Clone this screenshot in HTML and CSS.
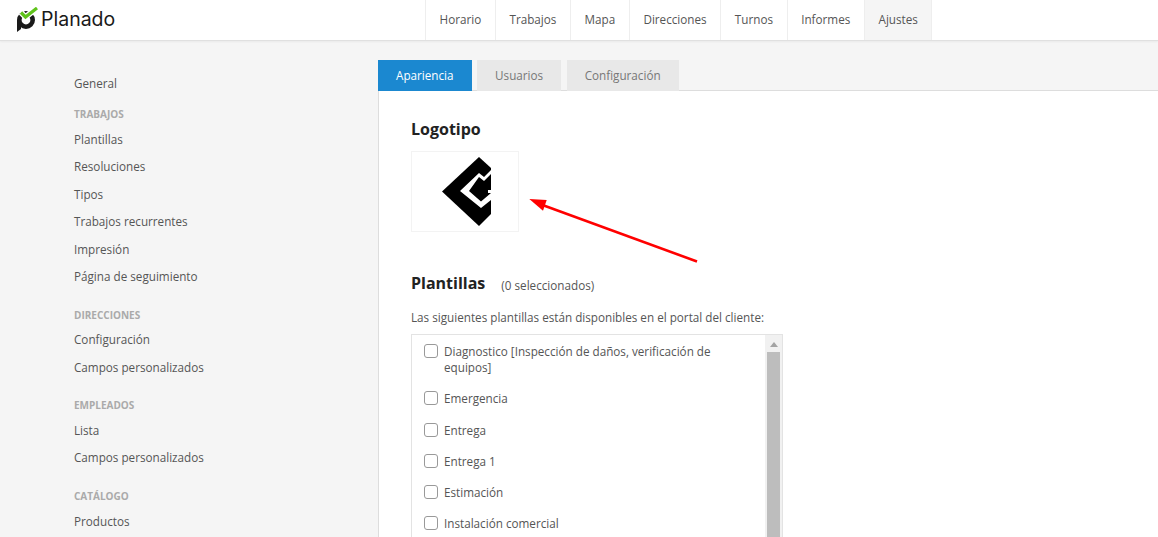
FILE: index.html
```html
<!DOCTYPE HTML>
<html>
<head>
    <meta charset="utf-8" />
    <title>Planado</title>
    <link rel="stylesheet" href="styles.css">
</head>
<body>

<header class="topbar">
    <a class="brand" href="#">
        <svg class="brand-icon" width="24" height="27" viewBox="16 7 24 27">
            <circle cx="26" cy="20" r="6.7" fill="none" stroke="#1a1a1a" stroke-width="4.6"/>
            <path d="M17 20h4v9l-4 3z" fill="#1a1a1a"/>
            <path d="M21 12.5l4.5 4.5L37 8" fill="none" stroke="#fff" stroke-width="6"/>
            <path d="M21 12.5l4.5 4.5L37 8" fill="none" stroke="#5fc31b" stroke-width="3.2"/>
        </svg>
        <span class="brand-name">Planado</span>
    </a>
    <nav class="topnav">
        <a href="#">Horario</a>
        <a href="#">Trabajos</a>
        <a href="#">Mapa</a>
        <a href="#">Direcciones</a>
        <a href="#">Turnos</a>
        <a href="#">Informes</a>
        <a href="#" class="active">Ajustes</a>
    </nav>
</header>

<div class="layout">
    <aside class="sidebar">
        <a href="#">General</a>
        <h4>Trabajos</h4>
        <a href="#">Plantillas</a>
        <a href="#">Resoluciones</a>
        <a href="#">Tipos</a>
        <a href="#">Trabajos recurrentes</a>
        <a href="#">Impresión</a>
        <a href="#">Página de seguimiento</a>
        <h4>Direcciones</h4>
        <a href="#">Configuración</a>
        <a href="#">Campos personalizados</a>
        <h4>Empleados</h4>
        <a href="#">Lista</a>
        <a href="#">Campos personalizados</a>
        <h4>Catálogo</h4>
        <a href="#">Productos</a>
    </aside>

    <main class="content">
        <div class="tabs">
            <a href="#" class="active">Apariencia</a>
            <a href="#">Usuarios</a>
            <a href="#">Configuración</a>
        </div>
        <div class="panel">
            <h2>Logotipo</h2>
            <div class="logo-box">
                <svg width="51" height="72" viewBox="441 155 51 72">
                    <path fill="#000" d="M442 191.5 479 157 491 168V214L479 226z"/>
                    <path fill="#fff" d="M460 191 479 173 484 177 491 170V174L484 181 479 177 469 191 481 201.5 491 193V200L481 208z"/>
                    <path fill="#fff" d="M488 190h3v3h-3z"/>
                </svg>
            </div>
            <div class="section-title">
                <h2>Plantillas</h2>
                <span>(0 seleccionados)</span>
            </div>
            <p class="hint">Las siguientes plantillas están disponibles en el portal del cliente:</p>
            <div class="picker">
                <div class="picker-list">
                    <label><i class="check"></i>Diagnostico [Inspección de daños, verificación de equipos]</label>
                    <label><i class="check"></i>Emergencia</label>
                    <label><i class="check"></i>Entrega</label>
                    <label><i class="check"></i>Entrega 1</label>
                    <label><i class="check"></i>Estimación</label>
                    <label><i class="check"></i>Instalación comercial</label>
                </div>
                <div class="scroll">
                    <b class="scroll-up"></b>
                    <b class="scroll-thumb"></b>
                </div>
            </div>
        </div>
    </main>
</div>

<svg class="arrow" width="180" height="75" viewBox="520 191 180 75">
    <path d="M697 261.5 537 203" stroke="#f00" stroke-width="2.6" fill="none"/>
    <path d="M529.3 199 546.7 200 543 210.7z" fill="#f00"/>
</svg>

</body>
</html>
```

FILE: styles.css
```css
body, html {
    margin: 0;
    padding: 0;
    height: 100%;
    overflow: hidden;
    font-family: "Open Sans", Arial, sans-serif;
    font-size: 11.7px;
    color: #555;
}
a {
    color: inherit;
    text-decoration: none;
}
.topbar {
    height: 40px;
    display: flex;
    background-color: #fff;
    border-bottom: 1px solid #e0e0e0;
    box-shadow: 0 1px 2px rgba(0,0,0,0.05);
    position: relative;
}
.brand {
    width: 425px;
    box-sizing: border-box;
    padding: 7px 0 0 16px;
    display: flex;
    align-items: flex-start;
}
.brand-name {
    font-family: Inter, sans-serif;
    font-size: 19.5px;
    line-height: 24px;
    margin-left: 1px;
    color: #1a1a1a;
}
.topnav {
    display: flex;
    border-left: 1px solid #eee;
}
.topnav a {
    padding: 0 13.6px;
    line-height: 39px;
    border-right: 1px solid #eee;
}
.topnav a.active {
    background-color: #f5f5f5;
}
.layout {
    display: flex;
    background-color: #f5f5f5;
    height: 496px;
    overflow: hidden;
}
.sidebar {
    width: 378px;
    flex: none;
    box-sizing: border-box;
    padding: 28.5px 0 0 74px;
}
.sidebar a {
    display: block;
    height: 27.5px;
    line-height: 27.5px;
}
.sidebar h4 {
    margin: 14.2px 0 0;
    height: 21.5px;
    line-height: 21.5px;
    font-size: 10px;
    font-weight: 700;
    text-transform: uppercase;
    color: #aaa;
}
.sidebar h4:first-of-type {
    margin-top: 7px;
}
.content {
    flex: 1;
    min-width: 0;
    display: flex;
    flex-direction: column;
}
.tabs {
    display: flex;
    gap: 5.5px;
    padding-top: 19px;
    height: 30px;
    flex: none;
    border-bottom: 1px solid #ddd;
}
.tabs a {
    padding: 0 18px;
    line-height: 31px;
    height: 31px;
    background-color: #e8e8e8;
    color: #777;
    border-bottom: 1px solid #ddd;
}
.tabs a.active {
    background-color: #1b88d0;
    color: #fff;
    border-bottom: 0;
    height: 32px;
}
.panel {
    flex: 1;
    overflow: hidden;
    background-color: #fff;
    border-left: 1px solid #ddd;
    padding: 26px 0 0 32px;
}
.panel h2 {
    margin: 0;
    font-size: 16px;
    line-height: 24px;
    font-weight: 700;
    color: #222;
}
.logo-box {
    margin-top: 10px;
    width: 106px;
    height: 79px;
    border: 1px solid #f3f3f3;
}
.logo-box svg {
    display: block;
    margin: 3px 0 0 29px;
}
.section-title {
    display: flex;
    align-items: flex-end;
    gap: 16px;
    margin-top: 39px;
}
.section-title span {
    line-height: 20px;
}
.hint {
    margin: 13px 0 0;
    line-height: 18px;
}
.picker {
    margin-top: 8px;
    width: 370px;
    height: 300px;
    border: 1px solid #e3e3e3;
    display: flex;
}
.picker-list {
    flex: 1;
    padding: 8px 0 0 12px;
}
.picker-list label {
    display: block;
    position: relative;
    padding: 0 40px 0 20px;
    margin-bottom: 15.25px;
    line-height: 16px;
}
.check {
    width: 12px;
    height: 12px;
    border: 1px solid #999;
    border-radius: 3px;
    background-color: #fff;
    position: absolute;
    left: 0;
    top: 1px;
}
.scroll {
    width: 17px;
    flex: none;
    background-color: #f1f1f1;
}
.scroll-up {
    display: block;
    width: 0;
    margin: 7px auto 5px;
    border: 4px solid transparent;
    border-top: 0;
    border-bottom: 5px solid #a3a3a3;
}
.scroll-thumb {
    display: block;
    height: 280px;
    margin: 0 2px;
    background-color: #bdbdbd;
}
.arrow {
    position: absolute;
    left: 520px;
    top: 191px;
}
```
